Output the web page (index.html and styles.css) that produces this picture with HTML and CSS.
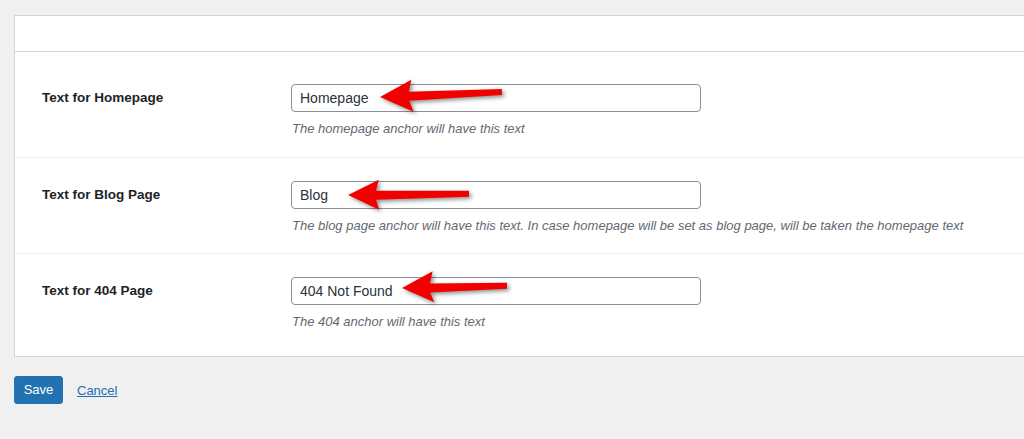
FILE: index.html
```html
<!DOCTYPE html>
<html lang="en">
<head>
<meta charset="utf-8">
<title>Breadcrumb texts</title>
<link rel="stylesheet" href="styles.css">
</head>
<body>
<div class="wrap">
  <form class="panel">
    <div class="panel-head"></div>
    <div class="panel-body">
      <div class="row row-first">
        <label class="label" for="home">Text for Homepage</label>
        <div class="field">
          <div class="input-wrap">
            <input id="home" class="text" type="text" value="Homepage">
            <svg class="arrow" width="260" height="60" viewBox="0 0 260 60">
              <path transform="translate(89,28) rotate(-2.3)" d="M0,0 L32,-16 L29,-4 L122,-3 L122,3 L29,5 L33,16 Z"/>
            </svg>
          </div>
          <p class="desc">The homepage anchor will have this text</p>
        </div>
      </div>
      <div class="row">
        <label class="label" for="blog">Text for Blog Page</label>
        <div class="field">
          <div class="input-wrap">
            <input id="blog" class="text" type="text" value="Blog">
            <svg class="arrow" width="260" height="60" viewBox="0 0 260 60">
              <path transform="translate(57,29) rotate(-0.6)" d="M0,0 L31,-15 L28,-4 L121,-3 L121,3 L28,5 L31,15 Z"/>
            </svg>
          </div>
          <p class="desc">The blog page anchor will have this text. In case homepage will be set as blog page, will be taken the homepage text</p>
        </div>
      </div>
      <div class="row row-last">
        <label class="label" for="notfound">Text for 404 Page</label>
        <div class="field">
          <div class="input-wrap">
            <input id="notfound" class="text" type="text" value="404 Not Found">
            <svg class="arrow" width="260" height="60" viewBox="0 0 260 60">
              <path transform="translate(111,26) rotate(-1.2)" d="M0,0 L31,-16 L28,-4 L105,-3 L105,3 L28,5 L32,15 Z"/>
            </svg>
          </div>
          <p class="desc">The 404 anchor will have this text</p>
        </div>
      </div>
    </div>
  </form>
  <div class="actions">
    <button class="btn-save" type="button">Save</button>
    <a class="cancel" href="#">Cancel</a>
  </div>
</div>
</body>
</html>
```

FILE: styles.css
```css
html, body {
  margin: 0;
  padding: 0;
  background: #f0f0f1;
  overflow: hidden;
}

body {
  font-family: "Liberation Sans", Arial, sans-serif;
  font-size: 13px;
  color: #1d2327;
  width: 1024px;
  height: 439px;
}

.wrap {
  padding: 15px 0 0 14px;
}

.panel {
  display: block;
  margin: 0 -30px 0 0;
  background: #fff;
  border: 1px solid #d3d4d6;
}

.panel-head {
  height: 35px;
  border-bottom: 1px solid #d3d4d6;
}

.panel-body {
  padding: 0 0 7px 0;
}

.row {
  display: grid;
  grid-template-columns: 249px 1fr;
  padding: 23px 0 18px 27px;
  border-bottom: 1px solid #f0f0f1;
}

.row-first {
  padding-top: 32px;
  padding-bottom: 19px;
}

.row-last {
  padding-top: 23px;
  border-bottom: 0;
}

.label {
  font-weight: bold;
  font-size: 13.5px;
  line-height: 18px;
  padding-top: 5px;
  color: #1d2327;
}

.field {
  display: flex;
  flex-direction: column;
}

.input-wrap {
  position: relative;
  width: 410px;
  height: 28px;
}

.text {
  box-sizing: border-box;
  width: 410px;
  height: 28px;
  margin: 0;
  padding: 0 8px;
  border: 1px solid #8c8f94;
  border-radius: 4px;
  background: #fff;
  font-family: "Liberation Sans", Arial, sans-serif;
  font-size: 14px;
  color: #2c3338;
  outline: none;
}

.arrow {
  position: absolute;
  left: 0;
  top: -15px;
  overflow: visible;
  pointer-events: none;
  filter: drop-shadow(2px 2px 2px rgba(0, 0, 0, 0.45));
}

.arrow path {
  fill: #f20000;
}

.desc {
  margin: 8px 0 0 1px;
  font-size: 13px;
  line-height: 18px;
  font-style: italic;
  color: #646970;
}

.actions {
  display: flex;
  align-items: center;
  gap: 14px;
  margin-top: 19px;
}

.btn-save {
  width: 49px;
  height: 28px;
  padding: 0;
  border: 1px solid #2271b1;
  border-radius: 3px;
  background: #2271b1;
  color: #fff;
  font-family: "Liberation Sans", Arial, sans-serif;
  font-size: 13px;
  line-height: 26px;
  cursor: pointer;
}

.cancel {
  color: #2271b1;
  font-size: 13px;
  text-decoration: underline;
}
```
